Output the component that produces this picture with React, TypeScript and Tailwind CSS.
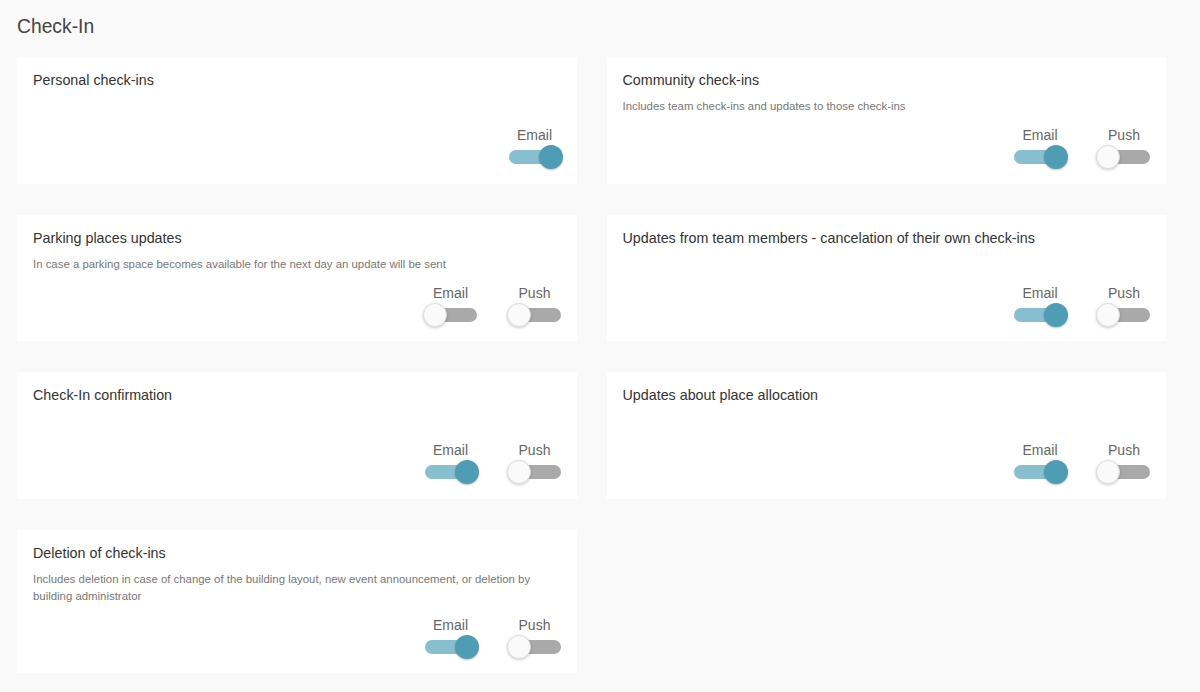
import React, { useState } from 'react';

type Channel = 'email' | 'push';

interface Setting {
  id: string;
  title: string;
  description?: string;
  email: boolean;
  push?: boolean;
}

const initialSettings: Setting[] = [
  { id: 'personal', title: 'Personal check-ins', email: true },
  {
    id: 'community',
    title: 'Community check-ins',
    description: 'Includes team check-ins and updates to those check-ins',
    email: true,
    push: false,
  },
  {
    id: 'parking',
    title: 'Parking places updates',
    description: 'In case a parking space becomes available for the next day an update will be sent',
    email: false,
    push: false,
  },
  {
    id: 'team',
    title: 'Updates from team members - cancelation of their own check-ins',
    email: true,
    push: false,
  },
  { id: 'confirmation', title: 'Check-In confirmation', email: true, push: false },
  { id: 'allocation', title: 'Updates about place allocation', email: true, push: false },
  {
    id: 'deletion',
    title: 'Deletion of check-ins',
    description:
      'Includes deletion in case of change of the building layout, new event announcement, or deletion by building administrator',
    email: true,
    push: false,
  },
];

const Toggle: React.FC<{ on: boolean; onChange: () => void }> = ({ on, onChange }) => (
  <button
    type="button"
    onClick={onChange}
    className="relative h-6 w-[56px] cursor-pointer"
    aria-pressed={on}
  >
    <span
      className={`absolute left-[2px] right-[2px] top-[5px] h-[14px] rounded-full ${
        on ? 'bg-[#88bfd0]' : 'bg-[#a9a9a9]'
      }`}
    />
    <span
      className={`absolute top-0 h-6 w-6 rounded-full transition-all ${
        on
          ? 'left-[32px] bg-[#4f9cb5] shadow-[0_1px_2px_rgba(0,0,0,0.25)]'
          : 'left-0 bg-[#fafafa] border border-[#dcdcdc] shadow-[0_1px_3px_rgba(0,0,0,0.2)]'
      }`}
    />
  </button>
);

export default function App() {
  const [settings, setSettings] = useState(initialSettings);

  const flip = (id: string, channel: Channel) =>
    setSettings((prev) =>
      prev.map((s) => (s.id === id ? { ...s, [channel]: !s[channel] } : s))
    );

  return (
    <div className="min-h-[692px] bg-[#f9f9f9] pl-[17px] pr-[34px] pt-[15px] pb-[20px] font-['Liberation_Sans',Arial,sans-serif] text-[#333]">
      <h1 className="text-[19.3px] leading-[24px] text-[#444]">Check-In</h1>

      <div className="mt-[18px] grid grid-cols-2 gap-x-[30px] gap-y-[31px]">
        {settings.map((s) => (
          <div key={s.id} className="flex flex-col bg-white pl-[16px] pr-[14px] pt-[13px] pb-[14.5px]">
            <div className="text-[14.3px] leading-[21px] text-[#333]">{s.title}</div>
            <div className="mt-[7px] min-h-[17px] text-[11.4px] leading-[17px] text-[#777]">
              {s.description}
            </div>
            <div className="mt-auto flex justify-end gap-[28px] pt-[10px]">
              <div className="flex flex-col items-center">
                <span className="text-[14px] leading-[20px] text-[#666]">Email</span>
                <Toggle on={s.email} onChange={() => flip(s.id, 'email')} />
              </div>
              {s.push !== undefined && (
                <div className="flex flex-col items-center">
                  <span className="text-[14px] leading-[20px] text-[#666]">Push</span>
                  <Toggle on={s.push} onChange={() => flip(s.id, 'push')} />
                </div>
              )}
            </div>
          </div>
        ))}
      </div>
    </div>
  );
}
